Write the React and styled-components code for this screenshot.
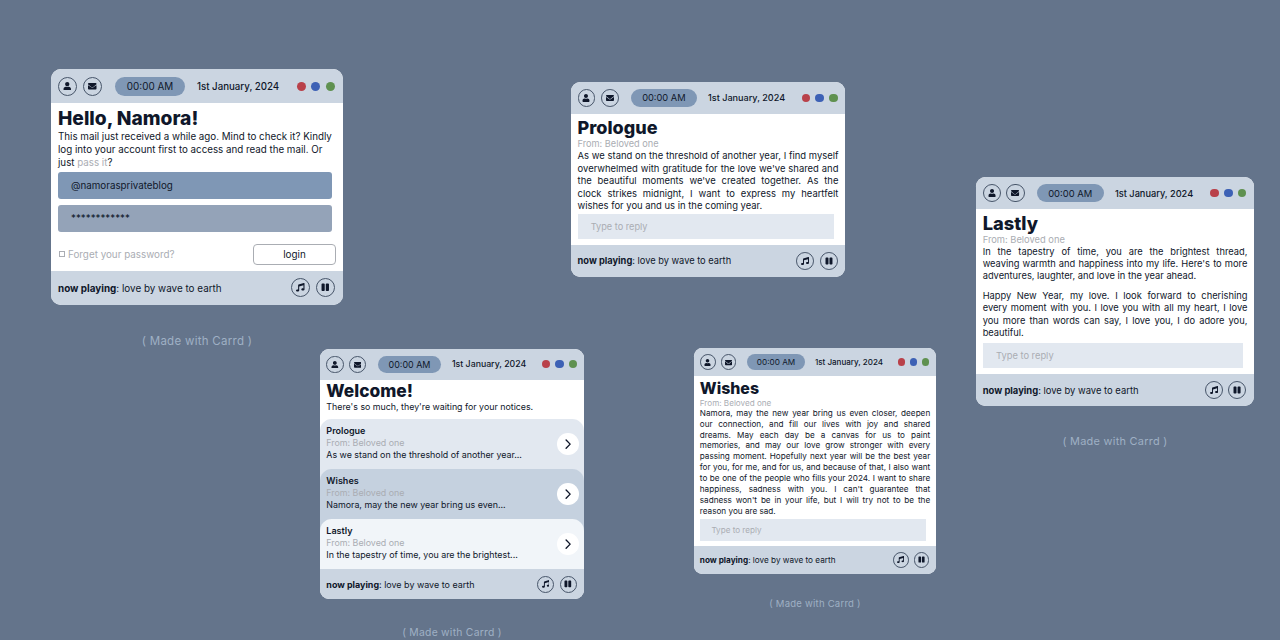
import React from 'react';
import styled, { createGlobalStyle } from 'styled-components';
import { FaUser, FaEnvelope, FaMusic, FaPause } from 'react-icons/fa';
import { ChevronRight } from 'lucide-react';

// every window is the same design at a different size, --u is one design pixel
const u = (n) => `calc(${n} * var(--u))`;

const Global = createGlobalStyle`
html, body {
  margin: 0;
  height: 100%;
  background: #64748b;
  font-family: Inter, "Liberation Sans", sans-serif;
  color: #0f172a;
  overflow: hidden;
}
`;

const Desktop = styled.main`
position: relative;
width: 1280px;
height: 640px;
overflow: hidden;
`;

const Frame = styled.div`
--u: ${p => p.$w / 292}px;
position: absolute;
left: ${p => p.$x}px;
top: ${p => p.$y}px;
width: ${p => p.$w}px;
display: flex;
flex-direction: column;
`;

const Window = styled.section`
background: #fff;
border-radius: ${u(10)};
overflow: hidden;
display: flex;
flex-direction: column;
`;

const Bar = styled.header`
height: ${u(34)};
background: #cbd5e1;
display: flex;
align-items: center;
padding: 0 ${u(8)} 0 ${u(7)};
`;

const RoundButton = styled.span`
width: ${u(19)};
height: ${u(19)};
border: 1px solid #475569;
box-sizing: border-box;
border-radius: 50%;
display: flex;
align-items: center;
justify-content: center;
flex: none;
margin-right: ${u(6)};
font-size: ${u(8.5)};
color: #0f172a;
&:last-child { margin-right: 0; }
`;

const Clock = styled.span`
width: ${u(70)};
height: ${u(19)};
margin-left: ${u(7)};
border-radius: ${u(10)};
background: #7f97b5;
font-size: ${u(9.9)};
display: flex;
align-items: center;
justify-content: center;
flex: none;
`;

const DateText = styled.span`
margin-left: ${u(12)};
font-size: ${u(9.7)};
font-weight: 500;
white-space: nowrap;
`;

const Dots = styled.div`
margin-left: auto;
display: flex;
gap: ${u(5.6)};
`;

const Dot = styled.i`
width: ${u(9)};
height: ${u(9)};
border-radius: 50%;
background: ${p => p.$c};
`;

const Body = styled.div`
padding: ${u(3)} ${u(7)} ${p => p.$tight ? u(5) : u(6)};
`;

const Title = styled.h1`
margin: 0;
font-size: ${u(19.2)};
line-height: ${p => p.$tight ? u(20) : u(24)};
font-weight: 800;
`;

const From = styled.div`
font-size: ${u(9.8)};
line-height: ${u(11)};
color: #aaadb3;
margin-bottom: ${p => u(p.$gap ?? 1)};
`;

const Para = styled.p`
margin: 0 0 ${u(7.5)};
font-size: ${p => u(p.$size ?? 9.78)};
line-height: ${p => u(p.$lead ?? 13.2)};
text-align: ${p => p.$left ? 'left' : 'justify'};
&:last-of-type { margin-bottom: ${u(2)}; }
`;

const Muted = styled.span`
color: #aaadb3;
`;

const Reply = styled.div`
height: ${u(26.5)};
margin: ${p => u(p.$top ?? 2)} ${u(5)} 0 0;
background: #e2e8f0;
display: flex;
align-items: center;
padding-left: ${u(14)};
font-size: ${u(9.8)};
color: #aaadb3;
`;

const Field = styled.div`
height: ${u(27)};
margin: 0 ${u(4)} ${u(6)} 0;
border-radius: ${u(3)};
background: ${p => p.$dim ? '#94a3b8' : '#7f97b5'};
display: flex;
align-items: center;
padding-left: ${u(13)};
font-size: ${u(9.8)};
`;

const LoginRow = styled.div`
display: flex;
align-items: center;
justify-content: space-between;
margin-top: ${u(12)};
font-size: ${u(9.85)};
color: #aaadb3;
`;

const Remember = styled.span`
display: flex;
align-items: center;
gap: ${u(3)};
padding-left: ${u(1)};
`;

const Tick = styled.i`
width: ${u(6)};
height: ${u(6)};
box-sizing: border-box;
border: 1px solid #aaadb3;
`;

const LoginButton = styled.span`
width: ${u(83)};
height: ${u(21)};
box-sizing: border-box;
border: 1px solid #aaadb3;
border-radius: ${u(4)};
color: #0f172a;
display: flex;
align-items: center;
justify-content: center;
`;

const Row = styled.div`
--r: ${u(13)};
box-sizing: border-box;
height: calc(${u(55.3)} + var(--r));
margin-bottom: calc(-1 * var(--r));
padding: ${u(7.2)} ${u(6)} 0 ${u(7)};
border-radius: var(--r) var(--r) 0 0;
background: ${p => p.$bg};
display: flex;
align-items: flex-start;
justify-content: space-between;
&:last-child {
  height: ${u(55.3)};
  margin-bottom: 0;
}
`;

const RowLead = styled.div`
font-size: ${u(9.8)};
line-height: ${u(13.2)};
`;

const RowName = styled.div`
font-weight: 600;
font-size: ${u(10)};
`;

const Go = styled.span`
width: ${u(24)};
height: ${u(24)};
margin-top: ${u(8.4)};
flex: none;
border-radius: 50%;
background: #fff;
display: flex;
align-items: center;
justify-content: center;
font-size: ${u(18)};
`;

const Player = styled.footer`
height: ${u(34)};
background: #cbd5e1;
display: flex;
align-items: center;
justify-content: space-between;
padding: 0 ${u(8)} 0 ${u(7)};
font-size: ${u(9.9)};
`;

const Controls = styled.div`
display: flex;
`;

const Caption = styled.div`
margin-top: ${u(29)};
text-align: center;
font-size: ${u(11.5)};
letter-spacing: ${u(0.28)};
color: #9fb0c4;
`;

const Chrome = ({ children }) => (
    <Window>
        <Bar>
            <RoundButton><FaUser /></RoundButton>
            <RoundButton><FaEnvelope /></RoundButton>
            <Clock>00:00 AM</Clock>
            <DateText>1st January, 2024</DateText>
            <Dots>
                <Dot $c="#b9414a" />
                <Dot $c="#3d61b5" />
                <Dot $c="#5f9150" />
            </Dots>
        </Bar>
        {children}
        <Player>
            <span><b>now playing</b>: love by wave to earth</span>
            <Controls>
                <RoundButton><FaMusic /></RoundButton>
                <RoundButton><FaPause /></RoundButton>
            </Controls>
        </Player>
    </Window>
);

const Letter = ({ title, paragraphs, size, lead, gap, replyTop }) => (
    <Chrome>
        <Body>
            <Title>{title}</Title>
            <From $gap={gap}>From: Beloved one</From>
            {paragraphs.map((text) => <Para key={text} $size={size} $lead={lead}>{text}</Para>)}
            <Reply $top={replyTop}>Type to reply</Reply>
        </Body>
    </Chrome>
);

const mails = [
    { name: 'Prologue', bg: '#e2e8f0', text: 'As we stand on the threshold of another year...' },
    { name: 'Wishes', bg: '#c5d1df', text: 'Namora, may the new year bring us even...' },
    { name: 'Lastly', bg: '#f1f5f9', text: 'In the tapestry of time, you are the brightest...' },
];

const App = () => (
    <Desktop>
        <Global />
        <Frame $x={51} $y={69} $w={292}>
            <Chrome>
                <Body>
                    <Title>Hello, Namora!</Title>
                    <Para $left>This mail just received a while ago. Mind to check it? Kindly log into your account first to access and read the mail. Or just <Muted>pass it</Muted>?</Para>
                    <Field>@namorasprivateblog</Field>
                    <Field $dim>************</Field>
                    <LoginRow>
                        <Remember><Tick />Forget your password?</Remember>
                        <LoginButton>login</LoginButton>
                    </LoginRow>
                </Body>
            </Chrome>
            <Caption>( Made with Carrd )</Caption>
        </Frame>

        <Frame $x={571} $y={82} $w={274}>
            <Letter
                title="Prologue"
                size={10.05}
                paragraphs={["As we stand on the threshold of another year, I find myself overwhelmed with gratitude for the love we've shared and the beautiful moments we've created together. As the clock strikes midnight, I want to express my heartfelt wishes for you and us in the coming year."]}
            />
        </Frame>

        <Frame $x={320} $y={349} $w={264}>
            <Chrome>
                <Body $tight>
                    <Title $tight>Welcome!</Title>
                    <Para $left>There's so much, they're waiting for your notices.</Para>
                </Body>
                <div>
                    {mails.map((mail) => (
                        <Row key={mail.name} $bg={mail.bg}>
                            <RowLead>
                                <RowName>{mail.name}</RowName>
                                <Muted>From: Beloved one</Muted>
                                <div>{mail.text}</div>
                            </RowLead>
                            <Go><ChevronRight size="1em" /></Go>
                        </Row>
                    ))}
                </div>
            </Chrome>
            <Caption>( Made with Carrd )</Caption>
        </Frame>

        <Frame $x={694} $y={348} $w={242}>
            <Letter
                title="Wishes"
                gap={0}
                size={9.85}
                paragraphs={["Namora, may the new year bring us even closer, deepen our connection, and fill our lives with joy and shared dreams. May each day be a canvas for us to paint memories, and may our love grow stronger with every passing moment. Hopefully next year will be the best year for you, for me, and for us, and because of that, I also want to be one of the people who fills your 2024. I want to share happiness, sadness with you. I can't guarantee that sadness won't be in your life, but I will try not to be the reason you are sad."]}
            />
            <Caption>( Made with Carrd )</Caption>
        </Frame>

        <Frame $x={976} $y={177} $w={278}>
            <Letter
                title="Lastly"
                gap={0}
                lead={13}
                replyTop={4}
                paragraphs={[
                    "In the tapestry of time, you are the brightest thread, weaving warmth and happiness into my life. Here's to more adventures, laughter, and love in the year ahead.",
                    "Happy New Year, my love. I look forward to cherishing every moment with you. I love you with all my heart, I love you more than words can say, I love you, I do adore you, beautiful.",
                ]}
            />
            <Caption>( Made with Carrd )</Caption>
        </Frame>
    </Desktop>
);

export default App;
